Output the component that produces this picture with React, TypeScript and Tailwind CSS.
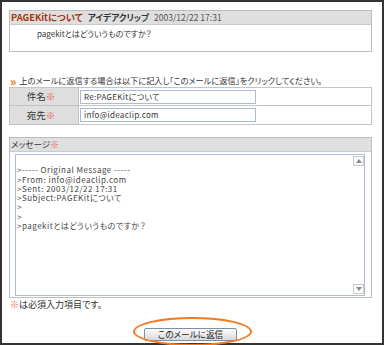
import React from "react";

const jp = "font-['Noto_Sans_CJK_JP',sans-serif] [font-feature-settings:'palt']";

const quoted = [
  "",
  ">----- Original Message -----",
  ">From: info@ideaclip.com",
  ">Sent: 2003/12/22 17:31",
  ">Subject:PAGEKitについて",
  ">",
  ">",
  ">pagekitとはどういうものですか？",
];

function Req() {
  return <span className="text-[#f2504a]">※</span>;
}

function ScrollBtn({ up }: { up?: boolean }) {
  return (
    <div className="flex h-[10px] w-[11px] items-center justify-center border border-[#c9c9c9] bg-[#fbfbfb]">
      <svg width="6" height="4" viewBox="0 0 6 4">
        {up ? (
          <polygon points="3,0 6,4 0,4" fill="#8a8a8a" />
        ) : (
          <polygon points="0,0 6,0 3,4" fill="#8a8a8a" />
        )}
      </svg>
    </div>
  );
}

function FormRow({ label, value, last }: { label: string; value: string; last?: boolean }) {
  return (
    <div className={`flex h-[18px] ${last ? "" : "border-b border-[#c4c4c4]"}`}>
      <div className="flex w-[69px] items-center justify-center border-r border-[#c4c4c4] bg-[#dedede] pr-[6px] text-[9.5px] text-[#333]">
        {label}
        <Req />
      </div>
      <div className="flex items-center pl-[1px]">
        <div className="flex h-[14px] w-[176px] items-center border border-[#a9bdd6] bg-white pl-[3px] text-[8px] tracking-[0.3px] text-[#333]">
          {value}
        </div>
      </div>
    </div>
  );
}

export default function App() {
  return (
    <div className={`h-[345px] w-[386px] bg-white ${jp}`}>
      <div className="flex h-[345px] w-[384px] flex-col border-2 border-[#333] pl-[7px] pr-[10px] pt-[8px]">
        {/* original message */}
        <div className="h-[42px] border border-[#bdbdbd]">
          <div className="flex h-[14px] items-center gap-[5px] border-b border-[#cacaca] bg-[#dfdfdf] pl-[1px] leading-none">
            <span className="text-[9.3px] font-bold text-[#a8350c]">PAGEKitについて</span>
            <span className="text-[8.6px] font-bold text-[#333]">アイデアクリップ</span>
            <span className="text-[8.5px] text-[#555]">2003/12/22 17:31</span>
          </div>
          <div className="pl-[27px] pt-[3px] text-[8px] leading-[12px] text-[#333]">
            pagekitとはどういうものですか？
          </div>
        </div>

        {/* instruction */}
        <div className="mt-[22px] flex h-[13px] items-center gap-[3px] pl-[1px] text-[8.2px] leading-none text-[#333]">
          <span className="text-[12px] font-bold leading-none text-[#f07000]">»</span>
          <span>上のメールに返信する場合は以下に記入し「このメールに返信」をクリックしてください。</span>
        </div>

        {/* subject / to */}
        <div className="border border-[#c4c4c4]">
          <FormRow label="件名" value="Re:PAGEKitについて" />
          <FormRow label="宛先" value="info@ideaclip.com" last />
        </div>

        {/* message */}
        <div className="mt-[12px] h-[161px] border border-[#bdbdbd]">
          <div className="flex h-[14px] items-center border-b border-[#cacaca] bg-[#dfdfdf] pl-[1px] text-[8.6px] leading-none text-[#333]">
            メッセージ
            <Req />
          </div>
          <div className="ml-[5px] mt-[2px] flex h-[142px] w-[350px] border border-[#a9bdd6] bg-white">
            <div className="flex-1 pl-[1px] pt-[1px] text-[8px] tracking-[0.5px] text-[#444]">
              {quoted.map((l, i) => (
                <div key={i} className="h-[9.3px] whitespace-pre leading-[9.3px]">
                  {l}
                </div>
              ))}
            </div>
            <div className="flex flex-col justify-between py-[1px]">
              <ScrollBtn up />
              <ScrollBtn />
            </div>
          </div>
        </div>

        <div className="mt-[1px] pl-[1px] text-[9px] leading-[12px] text-[#333]">
          <Req />
          は必須入力項目です。
        </div>

        {/* submit */}
        <div className="mt-[17px] flex justify-center">
          <div className="relative">
            <button className="flex h-[13px] w-[93px] items-center justify-center rounded-[2px] border border-[#7d8fa8] bg-gradient-to-b from-[#fdfdfd] to-[#d9d9d9] text-[8.6px] leading-none text-[#222]">
              このメールに返信
            </button>
            <div className="pointer-events-none absolute left-[-11px] top-[-11px] h-[29px] w-[119px] rounded-[50%] border-2 border-[#f47a20]" />
          </div>
        </div>
      </div>
    </div>
  );
}
